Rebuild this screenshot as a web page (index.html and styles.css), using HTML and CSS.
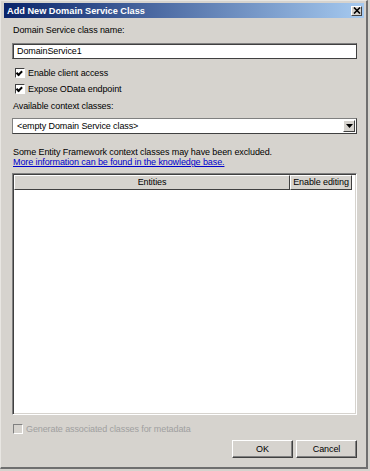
FILE: index.html
```html
<!DOCTYPE html>
<html lang="en">
<head>
  <meta charset="UTF-8" />
  <title>Add New Domain Service Class</title>
  <link rel="stylesheet" href="styles.css">
</head>
<body>
  <div class="window">
    <div class="titlebar">
      <span class="title">Add New Domain Service Class</span>
      <span class="close">
        <svg width="8" height="7" viewBox="0 0 8 7"><path d="M1 0.5 L7 6.5 M7 0.5 L1 6.5" stroke="#000" stroke-width="1.6"/></svg>
      </span>
    </div>

    <div class="content">
      <label class="label">Domain Service class name:</label>
      <div class="textbox">DomainService1</div>

      <div class="check first"><span class="box checked"></span>Enable client access</div>
      <div class="check"><span class="box checked"></span>Expose OData endpoint</div>

      <label class="label ctx">Available context classes:</label>
      <div class="combo">
        <span>&lt;empty Domain Service class&gt;</span>
        <span class="arrow"><svg width="7" height="4" viewBox="0 0 7 4"><path d="M0 0 H7 L3.5 4 Z" fill="#000"/></svg></span>
      </div>

      <p class="note">Some Entity Framework context classes may have been excluded.<br>
        <a href="#">More information can be found in the knowledge base.</a></p>

      <div class="grid">
        <div class="grid-head">
          <div class="col entities">Entities</div>
          <div class="col editing">Enable editing</div>
        </div>
      </div>

      <div class="check disabled"><span class="box"></span>Generate associated classes for metadata</div>

      <div class="buttons">
        <button>OK</button>
        <button>Cancel</button>
      </div>
    </div>
  </div>
</body>
</html>
```

FILE: styles.css
```css
* {
  margin: 0;
  padding: 0;
  box-sizing: border-box;
}
body {
  background-color: #d6d3ce;
  font-family: 'Liberation Sans', Arial, sans-serif;
  font-size: 9px;
  letter-spacing: -0.1px;
  color: #000;
}
.window {
  width: 368px;
  height: 469px;
  border-left: 1px solid #e8e6e2;
  border-top: 1px solid #e8e6e2;
  border-right: 2px solid #6f6f6f;
  border-bottom: 2px solid #6f6f6f;
  padding: 2px 2px 0 3px;
}
.titlebar {
  height: 15px;
  background: linear-gradient(to right, #0a246a, #a6caf0);
  display: flex;
  align-items: center;
  justify-content: space-between;
  padding: 0 2px 0 3px;
}
.title {
  color: #fff;
  font-weight: bold;
  font-size: 9.2px;
  letter-spacing: 0;
}
.close {
  width: 11px;
  height: 10px;
  background: #d6d3ce;
  border: 1px solid;
  border-color: #fff #404040 #404040 #fff;
  display: flex;
  align-items: center;
  justify-content: center;
}
.content {
  padding: 7px 7px 0 8px;
}
.label {
  display: block;
  height: 13px;
  margin-left: 1px;
}
.textbox {
  margin-top: 5px;
  height: 16px;
  background: #fff;
  border: 1px solid;
  border-color: #808080 #404040 #404040 #808080;
  box-shadow: inset 1px 1px 0 #404040;
  padding: 1px 4px;
  line-height: 12px;
}
.check {
  display: flex;
  align-items: center;
  height: 16px;
  margin-left: 3px;
}
.check.first {
  margin-top: 6px;
}
.box {
  width: 10px;
  height: 10px;
  background: #fff;
  border: 1px solid;
  border-color: #404040 #fff #fff #404040;
  margin-right: 3px;
  position: relative;
}
.box.checked::after {
  content: "";
  position: absolute;
  left: 1px;
  top: 1px;
  width: 4px;
  height: 2px;
  border-left: 2px solid #000;
  border-bottom: 2px solid #000;
  transform: rotate(-45deg) translate(-1px, 0);
}
.label.ctx {
  margin-top: 4px;
}
.combo {
  margin-top: 4px;
  height: 16px;
  background: #fff;
  border: 1px solid;
  border-color: #808080 #404040 #404040 #808080;
  display: flex;
  justify-content: space-between;
  align-items: center;
  padding-left: 4px;
}
.arrow {
  width: 12px;
  height: 12px;
  margin-right: 1px;
  background: #d6d3ce;
  border: 1px solid;
  border-color: #fff #404040 #404040 #fff;
  display: flex;
  align-items: center;
  justify-content: center;
}
.note {
  margin-top: 13px;
  margin-left: 1px;
  line-height: 10px;
}
.note a {
  color: #0000cc;
}
.grid {
  margin-top: 6px;
  height: 242px;
  background: #fff;
  border: 1px solid;
  border-color: #808080 #fff #fff #808080;
  box-shadow: inset 1px 1px 0 #404040, inset -1px -1px 0 #d6d3ce;
  padding: 1px;
}
.grid-head {
  display: flex;
  height: 15px;
}
.col {
  background: #d6d3ce;
  border: 1px solid;
  border-color: #fff #404040 #404040 #fff;
  text-align: center;
  line-height: 12px;
  white-space: nowrap;
}
.entities {
  flex: 1;
}
.editing {
  width: 62px;
  margin-right: 3px;
}
.check.disabled {
  color: #a0a0a0;
  margin-top: 6px;
  margin-left: 1px;
}
.check.disabled .box {
  background: #d6d3ce;
  border-color: #808080 #fff #fff #808080;
}
.buttons {
  display: flex;
  justify-content: flex-end;
  gap: 3px;
  margin-top: 3px;
}
.buttons button {
  width: 61px;
  height: 18px;
  font-family: inherit;
  font-size: 9px;
  letter-spacing: -0.1px;
  background: #d6d3ce;
  border: 1px solid;
  border-color: #fff #404040 #404040 #fff;
  box-shadow: inset -1px -1px 0 #808080;
}
```
